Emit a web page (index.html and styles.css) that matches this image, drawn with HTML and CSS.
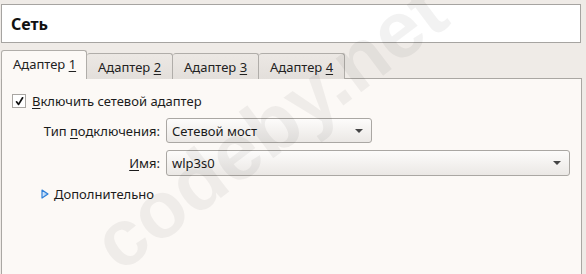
FILE: index.html
```html
<!DOCTYPE html>
<html lang="ru">
<head>
    <meta charset="UTF-8">
    <title>Сеть</title>
    <link rel="stylesheet" href="styles.css">
</head>
<body>
    <div class="page-title">Сеть</div>

    <div class="tabs">
        <div class="tab active"><span>Адаптер <u>1</u></span></div>
        <div class="tab"><span>Адаптер <u>2</u></span></div>
        <div class="tab"><span>Адаптер <u>3</u></span></div>
        <div class="tab"><span>Адаптер <u>4</u></span></div>
    </div>

    <div class="panel">
        <label class="check-row">
            <span class="checkbox">
                <svg width="11" height="11" viewBox="0 0 11 11"><path d="M2.5 5.8 L4.6 8.4 L8.6 1.8" fill="none" stroke="#111" stroke-width="1.7" stroke-linecap="round" stroke-linejoin="round"/></svg>
            </span>
            <span><u>В</u>ключить сетевой адаптер</span>
        </label>

        <div class="form-grid">
            <div class="form-label">Тип <u>п</u>одключения:</div>
            <div class="combo combo-short">
                <span>Сетевой мост</span>
                <span class="combo-arrow"></span>
            </div>

            <div class="form-label"><u>И</u>мя:</div>
            <div class="combo combo-wide">
                <span>wlp3s0</span>
                <span class="combo-arrow"></span>
            </div>
        </div>

        <div class="expander">
            <svg width="8" height="10" viewBox="0 0 8 10">
                <defs>
                    <linearGradient id="tri" x1="0" y1="0" x2="1" y2="0">
                        <stop offset="0" stop-color="#e6f2ff"/>
                        <stop offset="1" stop-color="#7fb6f0"/>
                    </linearGradient>
                </defs>
                <polygon points="1,1 7,5 1,9" fill="url(#tri)" stroke="#2f7fd8" stroke-width="1.2" stroke-linejoin="round"/>
            </svg>
            <span><u>Д</u>ополнительно</span>
        </div>
    </div>

    <div class="watermark">codeby.net</div>
</body>
</html>
```

FILE: styles.css
```css
* {
    margin: 0;
    padding: 0;
    box-sizing: border-box;
}

body {
    font-family: 'Noto Sans', 'DejaVu Sans', sans-serif;
    font-size: 13px;
    color: #1b1b1b;
    background: #efebe7;
    height: 274px;
    overflow: hidden;
    position: relative;
}

u {
    text-decoration: underline;
    text-underline-offset: 2px;
}

.page-title {
    margin: 4px 5px 0 1px;
    height: 39px;
    background: #fff;
    border: 1px solid #a6a4a1;
    padding-left: 9px;
    display: flex;
    align-items: center;
    font-size: 16px;
    font-weight: 700;
    color: #111;
}

.tabs {
    display: flex;
    align-items: flex-end;
    margin: 7px 0 0 1px;
    height: 29px;
    position: relative;
    z-index: 1;
}

.tab {
    width: 86px;
    height: 26px;
    padding-left: 11px;
    display: flex;
    align-items: center;
    border: 1px solid #b0ada9;
    border-bottom: none;
    border-left: none;
    border-radius: 3px 3px 0 0;
    background: linear-gradient(#ece8e4, #e3dfdb);
    color: #222;
    white-space: nowrap;
}

.tab.active {
    height: 29px;
    border-left: 1px solid #b0ada9;
    background: #fcf9f6;
    padding-bottom: 2px;
}

.panel {
    margin: -1px 4px 0 1px;
    height: 196px;
    background: #fcf9f6;
    border: 1px solid #aaa7a3;
    border-bottom: none;
    padding: 15px 11px 0 10px;
}

.check-row {
    display: flex;
    align-items: center;
    gap: 6px;
    height: 14px;
}

.checkbox {
    width: 14px;
    height: 14px;
    border: 1px solid #a9a6a2;
    background: #fff;
    display: flex;
    align-items: center;
    justify-content: center;
}

.form-grid {
    display: grid;
    grid-template-columns: 148px auto;
    column-gap: 6px;
    row-gap: 7px;
    margin-top: 10px;
    align-items: center;
}

.form-label {
    text-align: right;
}

.combo {
    height: 25px;
    border: 1px solid #aaa7a3;
    border-radius: 3px;
    background: linear-gradient(#fdfcfb, #ebe8e5);
    display: flex;
    align-items: center;
    justify-content: space-between;
    padding: 0 8px 0 5px;
    color: #1b1b1b;
}

.combo-short {
    width: 206px;
}

.combo-wide {
    width: 404px;
    height: 26px;
}

.combo-arrow {
    width: 0;
    height: 0;
    border-left: 4px solid transparent;
    border-right: 4px solid transparent;
    border-top: 4px solid #454545;
}

.expander {
    display: flex;
    align-items: center;
    gap: 5px;
    margin: 9px 0 0 29px;
    height: 17px;
}

/* watermark over the whole window */
.watermark {
    position: absolute;
    left: 270px;
    top: 127px;
    transform: translate(-50%, -50%) rotate(-37deg);
    font-family: 'Liberation Sans', Arial, sans-serif;
    font-weight: 700;
    font-size: 80px;
    color: rgba(0, 0, 0, 0.05);
    white-space: nowrap;
    pointer-events: none;
    z-index: 5;
}
```
